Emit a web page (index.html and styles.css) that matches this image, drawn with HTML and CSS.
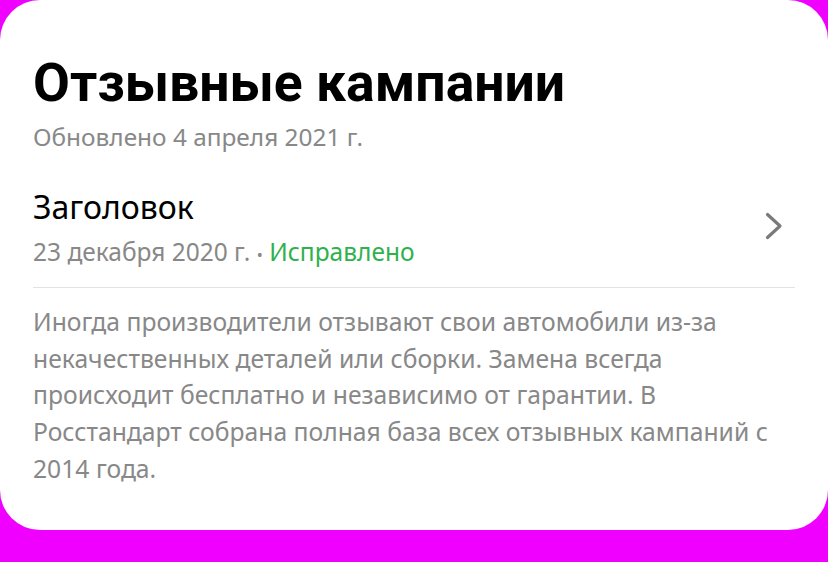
FILE: index.html
```html
<!DOCTYPE html>
<html lang="ru">
<head>
<meta charset="utf-8">
<link rel="stylesheet" href="styles.css">
</head>
<body>
<div class="card">
  <h1 class="title">Отзывные кампании</h1>
  <div class="updated">Обновлено 4 апреля 2021 г.</div>
  <div class="item">
    <div class="item-text">
      <div class="item-title">Заголовок</div>
      <div class="item-meta">23 декабря 2020 г. <span class="dot">•</span> <span class="status">Исправлено</span></div>
    </div>
    <svg class="chevron" width="20" height="30" viewBox="0 0 20 30"><path d="M3.5 3.5 L16 15 L3.5 26.5" fill="none" stroke="#7a7a7a" stroke-width="3.2" stroke-linecap="round" stroke-linejoin="round"/></svg>
  </div>
  <p class="desc">Иногда производители отзывают свои автомобили из-за некачественных деталей или сборки. Замена всегда происходит бесплатно и независимо от гарантии. В Росстандарт собрана полная база всех отзывных кампаний с 2014 года.</p>
</div>
</body>
</html>
```
FILE: styles.css
```css
html, body {
  margin: 0;
  padding: 0;
  background: #f000ff;
}
body {
  width: 828px;
  height: 562px;
  font-family: "Noto Sans", Roboto, sans-serif;
}
.card {
  box-sizing: border-box;
  width: 828px;
  height: 530px;
  background: #fff;
  border-radius: 40px;
  padding: 51px 33px 0 33px;
}
.title {
  margin: 0;
  font-family: Roboto, "Noto Sans", sans-serif;
  font-size: 53.5px;
  font-weight: 700;
  line-height: 64px;
  color: #000;
}
.updated {
  margin-top: 7px;
  font-size: 24.4px;
  line-height: 30px;
  color: #888;
}
.item {
  display: flex;
  align-items: center;
  justify-content: space-between;
  margin-top: 36px;
  padding-bottom: 17px;
  border-bottom: 1px solid #e3e3e3;
}
.item-title {
  font-size: 32px;
  line-height: 38px;
  color: #000;
}
.item-meta {
  margin-top: 11px;
  font-size: 24.5px;
  line-height: 30px;
  color: #888;
}
.dot {
  font-size: 16px;
}
.status {
  color: #2fb14d;
}
.chevron {
  margin-right: 11px;
  margin-bottom: 6px;
}
.desc {
  margin: 16px 0 0 0;
  font-size: 24.7px;
  line-height: 36.7px;
  color: #888;
}
```
